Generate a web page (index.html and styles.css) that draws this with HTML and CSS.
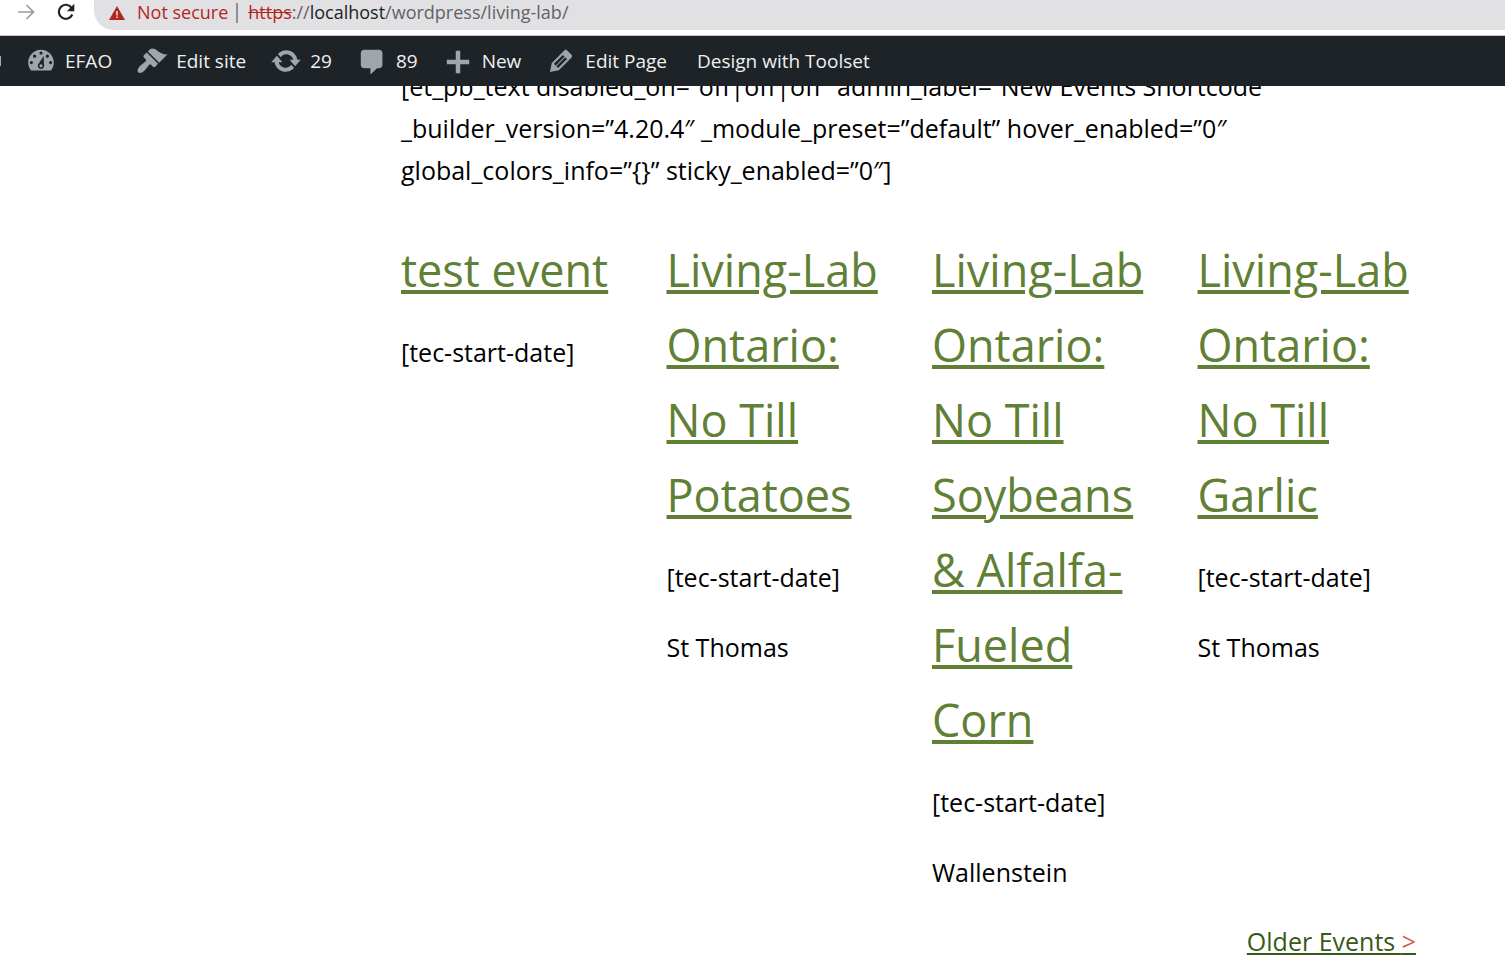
FILE: index.html
```html
<!DOCTYPE html>
<html lang="en">
<head>
<meta charset="utf-8">
<title>Living Lab</title>
<link rel="stylesheet" href="styles.css">
</head>
<body>
<header class="top">
  <div class="browser">
    <button class="nav-button" type="button" aria-label="Forward">
      <svg class="nav-icon" viewBox="0 0 20 20" fill="none" stroke="#9b9b9b" stroke-width="1.7"><path d="M2 10h15M10.500 3l7 7-7 7"/></svg>
    </button>
    <button class="nav-button" type="button" aria-label="Reload">
      <svg class="nav-icon" viewBox="0 0 20 20" fill="none" stroke="#202124" stroke-width="2.200"><path d="M16.300 12.500A7 7 0 1 1 15.500 5.600L17 7.200"/><path d="M18.300 1.800v7.400h-7.400z" fill="#202124" stroke="none"/></svg>
    </button>
    <div class="address">
      <svg class="warning" viewBox="0 0 16 14"><path d="M8 0l8 14H0z" fill="#b3261e"/><path d="M7.200 5h1.600v4.500H7.200zM7.200 10.500h1.600v1.600H7.200z" fill="#e1e1e3"/></svg>
      <span class="insecure">Not secure</span>
      <span class="divider"></span>
      <span class="url"><s class="scheme">https</s>://<span class="host">localhost</span>/wordpress/living-lab/</span>
    </div>
  </div>
  <nav class="admin-bar" aria-label="Toolbar">
    <span class="avatar-edge"></span>
    <a class="admin-item" href="#"><svg class="admin-icon" viewBox="0 0 20 20"><path fill-rule="evenodd" d="M3.760 16h12.480c1.100-1.370 1.760-3.110 1.760-5 0-4.420-3.580-8-8-8s-8 3.580-8 8c0 1.890.66 3.630 1.760 5zM10 4c.55 0 1 .45 1 1s-.45 1-1 1-1-.45-1-1 .45-1 1-1zM6 6c.55 0 1 .45 1 1s-.45 1-1 1-1-.45-1-1 .45-1 1-1zm8 0c.55 0 1 .45 1 1s-.45 1-1 1-1-.45-1-1 .45-1 1-1zm-5.370 5.550L11.700 6.800l.1 5.300c.15.280.2.580.2.900 0 1.100-.9 2-2 2s-2-.9-2-2c0-.57.24-1.080.63-1.450zM4 10c.55 0 1 .45 1 1s-.45 1-1 1-1-.45-1-1 .45-1 1-1zm12 0c.55 0 1 .45 1 1s-.45 1-1 1-1-.45-1-1 .45-1 1-1zm-5 3c0-.55-.45-1-1-1s-1 .45-1 1 .45 1 1 1 1-.45 1-1z"/></svg>EFAO</a>
    <a class="admin-item" href="#"><svg class="admin-icon" viewBox="0 0 20 20"><path d="M14.480 11.060L7.410 3.990l1.500-1.500c.5-.56 2.300-.47 3.510.32 1.210.8 1.430 1.280 2.910 2.100 1.180.64 2.450 1.260 4.450.85zm-.71.71L6.700 4.700 4.930 6.470c-.39.39-.39 1.020 0 1.410l1.060 1.060c.39.39.39 1.030 0 1.420-.6.6-1.430 1.110-2.210 1.690-.35.26-.7.53-1.010.84C1.430 14.230.4 16.080 1.400 17.070c.99 1 2.840-.03 4.180-1.360.31-.31.58-.66.85-1.020.57-.78 1.080-1.610 1.690-2.210.39-.39 1.020-.39 1.410 0l1.060 1.060c.39.39 1.020.39 1.410 0z"/></svg>Edit site</a>
    <a class="admin-item" href="#"><svg class="admin-icon" viewBox="0 0 20 20"><path d="M10.200 3.280c3.530 0 6.430 2.610 6.920 6h2.080l-3.500 4-3.500-4h2.320c-.45-1.970-2.210-3.450-4.320-3.450-1.450 0-2.730.71-3.540 1.780L4.950 5.660C6.230 4.200 8.110 3.280 10.200 3.280zm-.4 13.440c-3.520 0-6.430-2.610-6.920-6H.8l3.500-4 3.500 4H5.480c.45 1.970 2.210 3.450 4.320 3.450 1.450 0 2.730-.71 3.540-1.780l1.710 1.950c-1.280 1.460-3.150 2.380-5.250 2.380z"/></svg>29</a>
    <a class="admin-item" href="#"><svg class="admin-icon" viewBox="0 0 20 20"><path d="M5 3h9.500c1.100 0 2 .9 2 2v7.500c0 1.100-.9 2-2 2h-1.300L9 18.500v-4H5c-1.100 0-2-.9-2-2V5c0-1.100.9-2 2-2z"/></svg>89</a>
    <a class="admin-item" href="#"><svg class="admin-icon" viewBox="0 0 20 20"><path d="M17 9.200v2.800h-5.600v5.600H8.600V12H3V9.200h5.600V3.600h2.800v5.600z"/></svg>New</a>
    <a class="admin-item" href="#"><svg class="admin-icon" viewBox="0 0 20 20"><path fill-rule="evenodd" d="M13.890 3.390l2.710 2.720c.46.46.42 1.240.03 1.640l-8.010 8.020-5.560 1.160 1.160-5.580s7.600-7.630 7.990-8.030c.39-.39 1.220-.39 1.680.07zm-2.730 2.790l-5.590 5.610 1.110 1.110 5.540-5.650zm-2.970 8.230l5.580-5.600-1.070-1.080-5.590 5.600z"/></svg>Edit Page</a>
    <a class="admin-item text-only" href="#">Design with Toolset</a>
  </nav>
</header>
<main class="content">
  <p class="shortcode">[et_pb_text disabled_on=”off|off|off” admin_label=”New Events Shortcode _builder_version=”4.20.4″ _module_preset=”default” hover_enabled=”0″ global_colors_info=”{}” sticky_enabled=”0″]</p>
  <div class="events">
    <article class="event">
      <h2 class="event-title"><a href="#">test event</a></h2>
      <p class="event-meta">[tec-start-date]</p>
    </article>
    <article class="event">
      <h2 class="event-title"><a href="#">Living-Lab Ontario: No&nbsp;Till Potatoes</a></h2>
      <p class="event-meta">[tec-start-date]</p>
      <p class="event-meta">St Thomas</p>
    </article>
    <article class="event">
      <h2 class="event-title"><a href="#">Living-Lab Ontario: No&nbsp;Till Soybeans &amp;&nbsp;Alfalfa-Fueled Corn</a></h2>
      <p class="event-meta">[tec-start-date]</p>
      <p class="event-meta">Wallenstein</p>
    </article>
    <article class="event">
      <h2 class="event-title"><a href="#">Living-Lab Ontario: No&nbsp;Till Garlic</a></h2>
      <p class="event-meta">[tec-start-date]</p>
      <p class="event-meta">St Thomas</p>
    </article>
  </div>
  <div class="pager"><a class="older" href="#">Older Events <span class="arrow">&gt;</span></a></div>
</main>
</body>
</html>
```
FILE: styles.css
```css
* { box-sizing: border-box; }
html { overflow: hidden; }
body {
  margin: 0;
  background: #fff;
  color: #000;
  font-family: "Open Sans", "Noto Sans", sans-serif;
  font-size: 25px;
  line-height: 42px;
}
.top { position: fixed; top: 0; left: 0; right: 0; z-index: 1; background: #fff; }
.browser { display: flex; align-items: flex-start; height: 36px; padding-left: 16px; border-bottom: 1px solid #c8c8ca; }
.nav-button { width: 20px; height: 24px; margin-right: 20px; padding: 2px 0; border: 0; background: none; }
.nav-button + .nav-button { margin-right: 18px; }
.nav-icon { display: block; width: 20px; height: 20px; }
.address {
  flex: 1;
  display: flex;
  align-items: flex-start;
  height: 30px;
  padding-left: 15px;
  border-bottom-left-radius: 20px;
  background: #e1e1e3;
  color: #5f6368;
  font-size: 18px;
  line-height: 24px;
}
.warning { width: 16px; height: 14px; margin: 6px 12px 0 0; }
.insecure { color: #b3261e; }
.divider { width: 2px; height: 20px; margin: 3px 10px 0 8px; background: #8f8f92; }
.scheme { color: #b3261e; }
.host { color: #202124; }
.admin-bar { display: flex; align-items: center; gap: 24px; height: 50px; background: #1d2327; font-size: 19px; line-height: 32px; white-space: nowrap; }
.avatar-edge { width: 1px; height: 10px; background: #a7aaad; }
.admin-item { display: flex; align-items: center; gap: 8px; color: #f0f0f1; text-decoration: none; }
.admin-icon { width: 32px; height: 32px; fill: #a0a5aa; }
.text-only { padding-left: 6px; }
.content { padding: 65px 89px 0 401px; }
.shortcode { margin: 0 0 41px; }
.events { display: grid; grid-template-columns: repeat(4, minmax(0, 1fr)); column-gap: 47px; }
.event-title { margin: 0 0 24px; font-size: 45px; font-weight: 400; line-height: 75px; }
.event-title a { color: #5f8035; text-decoration-thickness: 4px; text-underline-offset: 3px; }
.event-meta { margin: 0 0 28px; }
.event-meta:last-child { margin-bottom: 27px; }
.pager { text-align: right; }
.older { color: #375a17; text-decoration-thickness: 2px; text-underline-offset: 2px; }
.arrow { color: #cf5b4b; }
```
